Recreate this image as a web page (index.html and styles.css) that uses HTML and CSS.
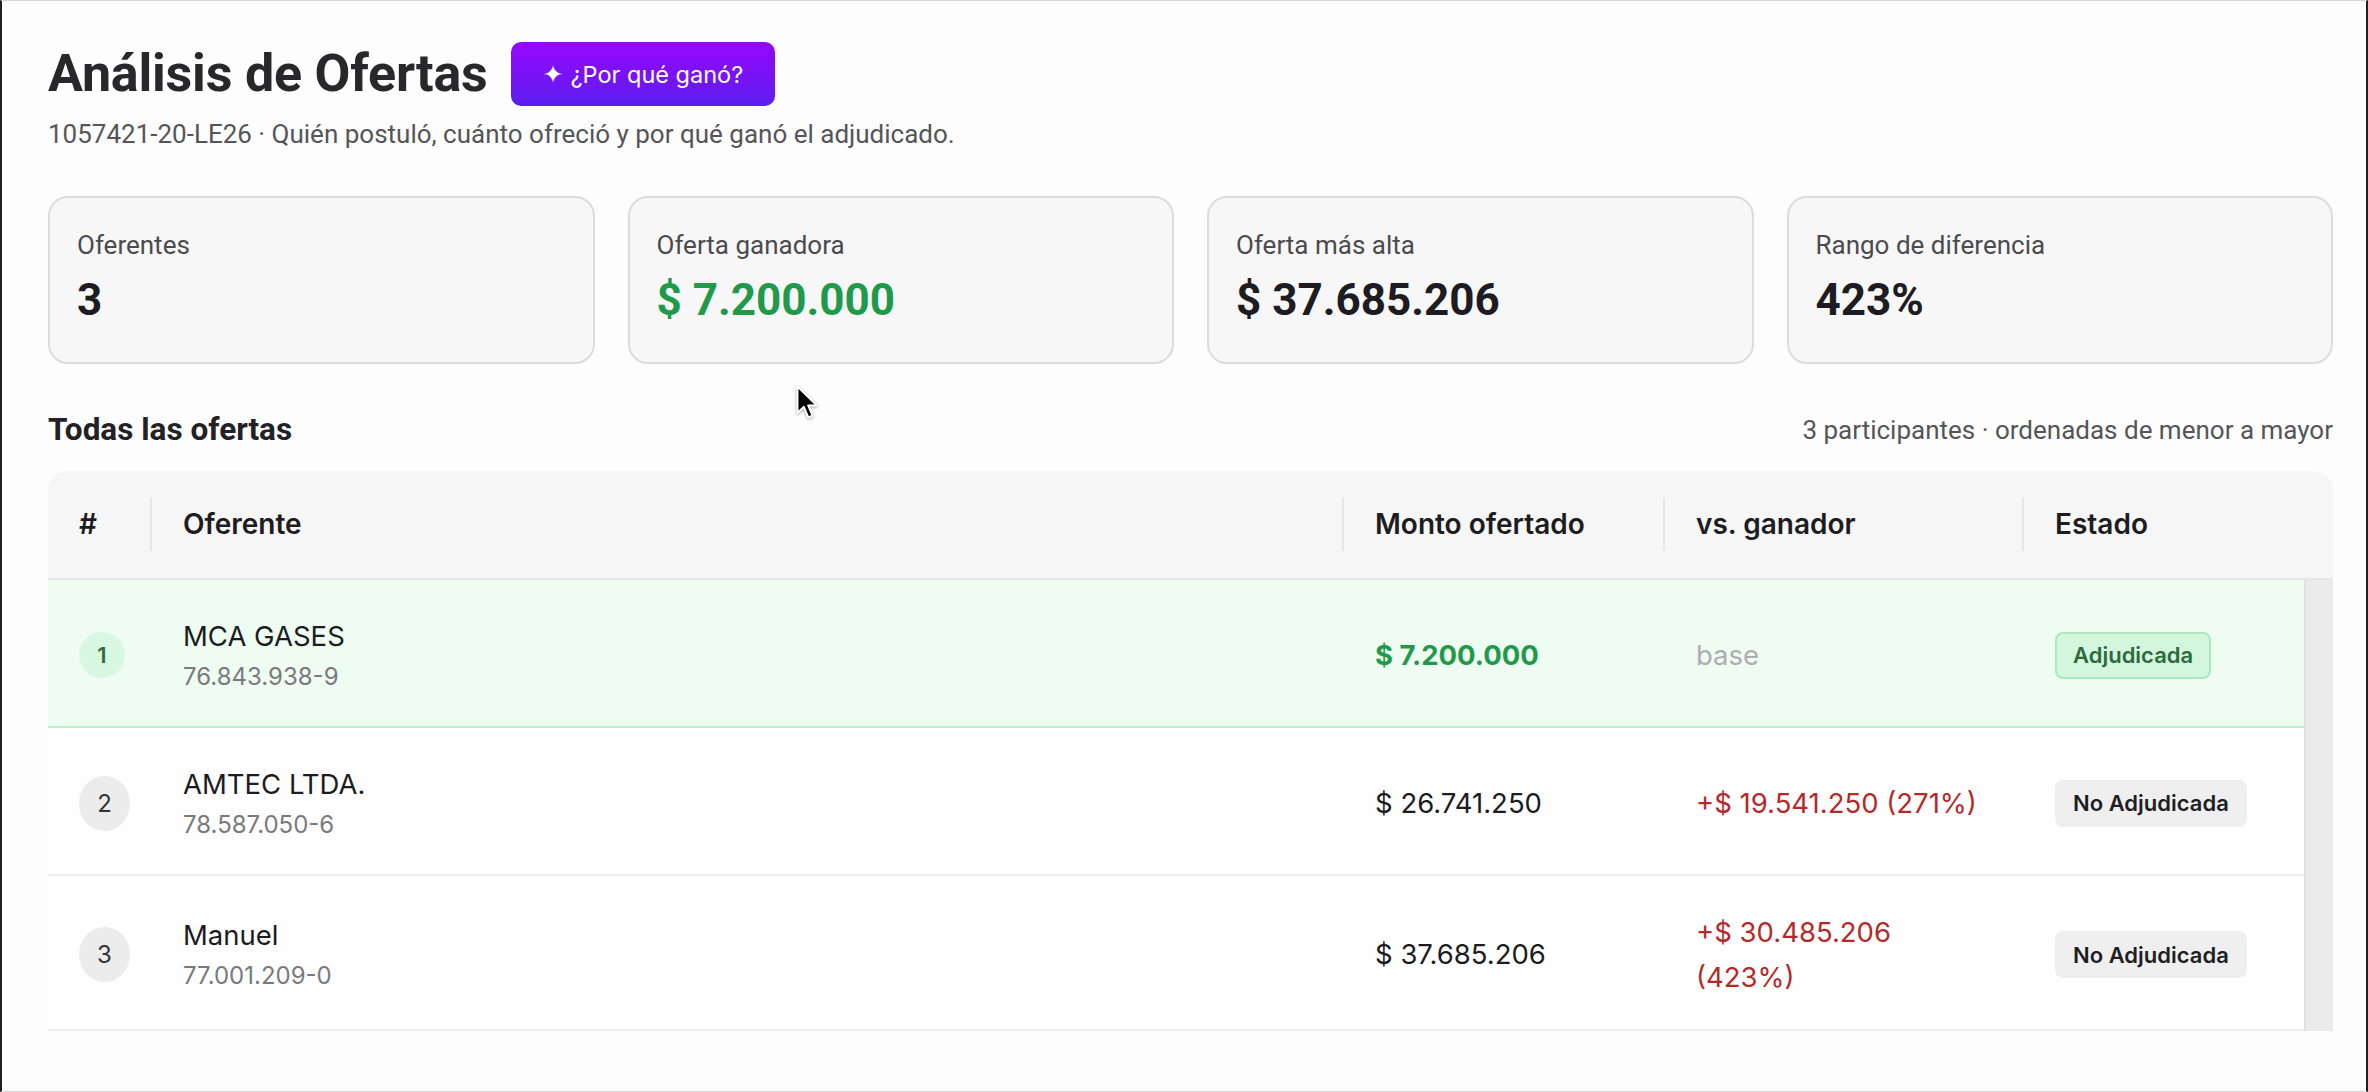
FILE: index.html
```html
<!DOCTYPE html>
<html lang="es">
<head>
<meta charset="utf-8">
<title>Análisis de Ofertas</title>
<link rel="stylesheet" href="styles.css">
</head>
<body>
<div class="frame">
  <main class="page">
    <header class="title-row">
      <h1 class="title">Análisis de Ofertas</h1>
      <button class="why-btn" type="button"><span class="spark">✦</span> ¿Por qué ganó?</button>
    </header>
    <p class="subtitle">1057421-20-LE26 · Quién postuló, cuánto ofreció y por qué ganó el adjudicado.</p>

    <section class="stats">
      <div class="stat">
        <div class="stat-label">Oferentes</div>
        <div class="stat-value">3</div>
      </div>
      <div class="stat">
        <div class="stat-label">Oferta ganadora</div>
        <div class="stat-value green">$ 7.200.000</div>
      </div>
      <div class="stat">
        <div class="stat-label">Oferta más alta</div>
        <div class="stat-value">$ 37.685.206</div>
      </div>
      <div class="stat">
        <div class="stat-label">Rango de diferencia</div>
        <div class="stat-value">423%</div>
      </div>
    </section>

    <div class="section-head">
      <h2 class="section-title">Todas las ofertas</h2>
      <span class="section-meta">3 participantes · ordenadas de menor a mayor</span>
    </div>

    <div class="grid">
      <div class="grid-header">
        <div class="hcell">#</div>
        <div class="hcell sep">Oferente</div>
        <div class="hcell sep">Monto ofertado</div>
        <div class="hcell sep">vs. ganador</div>
        <div class="hcell sep">Estado</div>
      </div>
      <div class="grid-body">
        <div class="rows">
          <div class="row winner">
            <div class="cell"><span class="rank rank-win">1</span></div>
            <div class="cell">
              <div class="bidder">
                <span class="bidder-name">MCA GASES</span>
                <span class="bidder-rut">76.843.938-9</span>
              </div>
            </div>
            <div class="cell"><span class="amount amount-win">$ 7.200.000</span></div>
            <div class="cell"><span class="diff diff-base">base</span></div>
            <div class="cell"><span class="badge badge-win">Adjudicada</span></div>
          </div>
          <div class="row">
            <div class="cell"><span class="rank">2</span></div>
            <div class="cell">
              <div class="bidder">
                <span class="bidder-name">AMTEC LTDA.</span>
                <span class="bidder-rut">78.587.050-6</span>
              </div>
            </div>
            <div class="cell"><span class="amount">$ 26.741.250</span></div>
            <div class="cell"><span class="diff diff-up">+$ 19.541.250 (271%)</span></div>
            <div class="cell"><span class="badge">No Adjudicada</span></div>
          </div>
          <div class="row">
            <div class="cell"><span class="rank">3</span></div>
            <div class="cell">
              <div class="bidder">
                <span class="bidder-name">Manuel</span>
                <span class="bidder-rut">77.001.209-0</span>
              </div>
            </div>
            <div class="cell"><span class="amount">$ 37.685.206</span></div>
            <div class="cell"><span class="diff diff-up">+$ 30.485.206<br>(423%)</span></div>
            <div class="cell"><span class="badge">No Adjudicada</span></div>
          </div>
        </div>
        <div class="gutter"></div>
      </div>
    </div>
  </main>

  <svg class="cursor" width="24" height="36" viewBox="0 0 16 24" aria-hidden="true">
    <path d="M1 1 L1 18.5 L5.2 14.6 L8.2 21.6 L11 20.4 L8.1 13.6 L13.8 13.6 Z" fill="#000" stroke="#fff" stroke-width="1.3" stroke-linejoin="round"/>
  </svg>
</div>
</body>
</html>
```

FILE: styles.css
```css
* {
  box-sizing: border-box;
}

html, body {
  margin: 0;
  padding: 0;
  background: #fdfdfd;
}

body {
  font-family: Roboto, "Liberation Sans", Arial, sans-serif;
  color: #27272a;
}

.frame {
  position: relative;
  height: 1092px;
  overflow: hidden;
  border-left: 2px solid #1f1f1f;
  border-right: 2px solid #1f1f1f;
  border-top: 1px solid #d6d6d6;
  border-bottom: 1px solid #d6d6d6;
  background: #fdfdfd;
}

.page {
  padding: 41px 33px 0 46px;
}

/* ---------- Title ---------- */
.title-row {
  display: flex;
  align-items: center;
  gap: 23px;
  height: 64px;
}

.title {
  margin: 0;
  font-size: 52px;
  line-height: 64px;
  font-weight: 700;
  color: #27272c;
  letter-spacing: -0.2px;
}

.why-btn {
  display: inline-flex;
  align-items: center;
  gap: 7px;
  height: 64px;
  padding: 0 32px;
  border: none;
  border-radius: 10px;
  background: linear-gradient(180deg, #9507fb 0%, #7a12f6 50%, #5b1ff0 100%);
  color: #fff;
  font-family: Inter, "Liberation Sans", sans-serif;
  font-size: 23.5px;
  font-weight: 400;
  cursor: pointer;
}

.spark {
  font-family: "DejaVu Sans", sans-serif;
  font-size: 25px;
  line-height: 1;
}

.subtitle {
  margin: 12px 0 0;
  font-size: 26px;
  line-height: 32px;
  color: #555558;
}

/* ---------- Stat cards ---------- */
.stats {
  display: grid;
  grid-template-columns: repeat(4, 1fr);
  gap: 33px;
  margin-top: 46px;
}

.stat {
  background: #f7f7f7;
  border: 2px solid #dcdcdc;
  border-radius: 20px;
  padding: 31px 27px 35px;
}

.stat-label {
  font-size: 26px;
  line-height: 33.6px;
  color: #4b4b4e;
}

.stat-value {
  margin-top: 10px;
  font-size: 44px;
  line-height: 54px;
  font-weight: 700;
  color: #1c1c22;
}

.stat-value.green {
  color: #1f9a4b;
}

/* ---------- Section head ---------- */
.section-head {
  display: flex;
  justify-content: space-between;
  align-items: center;
  height: 40px;
  margin-top: 46px;
}

.section-title {
  margin: 0;
  font-size: 31.5px;
  line-height: 40px;
  font-weight: 700;
  color: #222226;
}

.section-meta {
  font-size: 26px;
  line-height: 40px;
  color: #555558;
}

/* ---------- Grid ---------- */
.grid {
  margin-top: 21px;
  font-family: Inter, "Liberation Sans", sans-serif;
}

.grid-header {
  display: grid;
  grid-template-columns: 102px 1192px 321px 359px 311px;
  height: 109px;
  background: #f6f6f6;
  border-radius: 20px 20px 0 0;
  border-bottom: 2px solid #e7e7e7;
}

.hcell {
  position: relative;
  display: flex;
  align-items: center;
  padding-left: 33px;
  font-size: 28px;
  font-weight: 600;
  color: #1d1d21;
}

.hcell:first-child {
  padding-left: 31px;
}

.hcell.sep::before {
  content: "";
  position: absolute;
  left: 0;
  top: 27px;
  bottom: 27px;
  width: 2px;
  background: #e6e6e6;
}

.grid-body {
  display: flex;
}

.rows {
  flex: 1;
}

.gutter {
  width: 29px;
  background: #ebebeb;
  border-left: 2px solid #e1e1e1;
}

.row {
  display: grid;
  grid-template-columns: 102px 1192px 321px 359px 282px;
  min-height: 148px;
  background: #fefefe;
  border-bottom: 2px solid #ededed;
}

.row.winner {
  background: #eefcf2;
  border-bottom-color: #bdf0cf;
}

.cell {
  display: flex;
  align-items: center;
  padding: 34px 20px 29px 33px;
}

.cell:first-child {
  padding-left: 31px;
}

.rank {
  display: flex;
  align-items: center;
  justify-content: center;
  width: 55px;
  height: 55px;
  border-radius: 50%;
  background: #ececec;
  color: #333336;
  font-size: 24px;
}

.rank.rank-win {
  width: 46px;
  height: 46px;
  background: #d8f8e2;
  color: #2d6a3d;
  font-weight: 600;
  font-size: 22px;
}

.bidder {
  display: flex;
  flex-direction: column;
  gap: 3px;
}

.bidder-name {
  font-size: 27.5px;
  line-height: 40px;
  color: #1c1c1f;
}

.bidder-rut {
  font-size: 24px;
  line-height: 36px;
  color: #7a7a7d;
}

.amount {
  font-size: 27.5px;
  line-height: 45px;
  color: #1c1c1f;
}

.amount.amount-win {
  font-weight: 700;
  color: #1f9a4b;
}

.diff {
  font-size: 27.5px;
  line-height: 45px;
}

.diff-base {
  color: #adadb3;
}

.diff-up {
  color: #b42a2a;
}

.badge {
  display: inline-flex;
  align-items: center;
  height: 47px;
  padding: 0 16px;
  border-radius: 8px;
  background: #efefef;
  border: 2px solid #efefef;
  color: #1f1f23;
  font-size: 22px;
  font-weight: 600;
}

.badge.badge-win {
  background: #d3f6dd;
  border-color: #a9e9bd;
  color: #2d6a3d;
}

/* ---------- Cursor overlay ---------- */
.cursor {
  position: absolute;
  left: 794px;
  top: 384px;
  filter: drop-shadow(0 1px 1.5px rgba(0, 0, 0, 0.35));
}
```
